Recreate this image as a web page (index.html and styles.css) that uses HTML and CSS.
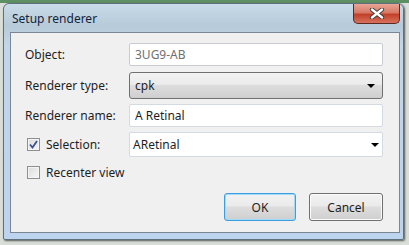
FILE: index.html
```html
<!DOCTYPE html>
<html lang="en">
  <head>
    <meta charset="UTF-8" />
    <title>Setup renderer</title>
    <link rel="stylesheet" href="styles.css">
  </head>
  <body>
    <div class="window">
      <div class="window__titlebar">
        <p class="window__title">Setup renderer</p>
        <button class="window__close" aria-label="Close">
          <svg width="16" height="11" viewBox="0 0 16 11">
            <path d="M3 1.5 L13 9.5 M13 1.5 L3 9.5" stroke="#3b3b3b" stroke-width="4.2" stroke-linecap="round" />
            <path d="M3 1.5 L13 9.5 M13 1.5 L3 9.5" stroke="#ffffff" stroke-width="2.4" stroke-linecap="round" />
          </svg>
        </button>
      </div>

      <div class="window__client">
        <div class="row row--field">
          <span class="row__label">Object:</span>
          <input class="field field--disabled" type="text" value="3UG9-AB" readonly />
        </div>
        <div class="row row--combo">
          <span class="row__label">Renderer type:</span>
          <div class="combo combo--button">
            <span>cpk</span>
            <span class="combo__arrow"></span>
          </div>
        </div>
        <div class="row row--field">
          <span class="row__label">Renderer name:</span>
          <input class="field" type="text" value="A Retinal" />
        </div>
        <div class="row row--edit">
          <label class="row__label check">
            <span class="check__box">
              <svg width="9" height="9" viewBox="0 0 9 9">
                <path d="M1 4.5 L3.5 7.5 L8 1" fill="none" stroke="#3c5296" stroke-width="1.8" />
              </svg>
            </span>
            Selection:
          </label>
          <div class="combo combo--edit">
            <span>ARetinal</span>
            <span class="combo__arrow"></span>
          </div>
        </div>
        <div class="row row--check">
          <label class="check">
            <span class="check__box"></span>
            Recenter view
          </label>
        </div>
        <div class="buttons">
          <button class="btn btn--default">OK</button>
          <button class="btn">Cancel</button>
        </div>
      </div>
    </div>
  </body>
</html>
```

FILE: styles.css
```css
* {
  margin: 0;
  padding: 0;
  box-sizing: border-box;
}

body {
  width: 409px;
  height: 245px;
  overflow: hidden;
  background: linear-gradient(180deg, #5e8f62 0, #5e8f62 3px, #d9ded9 3px);
  font-family: "Noto Sans", "Open Sans", sans-serif;
  font-size: 12px;
  color: #1e1e1e;
  padding: 3px 0 0 3px;
}

.window {
  width: 401px;
  height: 237px;
  display: flex;
  flex-direction: column;
  padding: 0 3px 6px 6px;
  border: 1px solid #5f6f7d;
  border-radius: 6px 6px 2px 2px;
  background: linear-gradient(180deg, #c9dbe8 0, #b6cad9 22px, #c2d6e9 40px, #bcd4ee 100%);
  box-shadow: 1px 1px 2px rgba(0, 0, 0, 0.6);
}

.window__titlebar {
  height: 28px;
  display: flex;
  justify-content: space-between;
  align-items: flex-start;
}

.window__title {
  margin: 6px 0 0 2px;
  font-size: 12px;
  color: #13233a;
}

.window__close {
  width: 47px;
  height: 20px;
  display: flex;
  justify-content: center;
  align-items: center;
  border: 1px solid #5c2a22;
  border-top: none;
  border-radius: 0 0 5px 5px;
  background: linear-gradient(180deg, #e9a597 0, #d67a66 45%, #c2402a 55%, #d8725c 100%);
}

.window__client {
  flex: 1;
  display: flex;
  flex-direction: column;
  padding: 10px 16px 0 14px;
  border: 1px solid #7b8593;
  background: #f0f0f0;
}

.row {
  display: flex;
  align-items: center;
}

.row__label {
  width: 104px;
  flex-shrink: 0;
}

.row--field {
  height: 23px;
}

.row--combo {
  height: 27px;
  margin: 6px 0 5px;
}

.row--edit {
  height: 25px;
  margin-top: 5px;
}

.row--check {
  height: 18px;
  margin-top: 6px;
}

.field,
.combo {
  width: 254px;
  height: 100%;
  font-family: inherit;
  font-size: 12px;
  color: #1e1e1e;
  padding: 0 5px;
  background: #ffffff;
  border: 1px solid #d5d9e0;
  border-radius: 2px;
}

.field--disabled {
  color: #707070;
  border-color: #c8ccd2;
}

.combo {
  display: flex;
  justify-content: space-between;
  align-items: center;
}

.combo--button {
  border-color: #707070;
  border-radius: 3px;
  background: linear-gradient(180deg, #f2f2f2 0, #ebebeb 45%, #dddddd 50%, #cfcfcf 100%);
  padding-right: 7px;
}

.combo--edit {
  padding: 0 3px 0 3px;
}

.combo__arrow {
  width: 0;
  height: 0;
  border-left: 4px solid transparent;
  border-right: 4px solid transparent;
  border-top: 4px solid #000000;
}

.check {
  display: flex;
  align-items: center;
  gap: 6px;
  padding-left: 2px;
}

.check__box {
  width: 13px;
  height: 13px;
  display: flex;
  justify-content: center;
  align-items: center;
  border: 1px solid #8e8f8f;
  background: linear-gradient(135deg, #dcdcdc 0, #f6f6f6 100%);
  box-shadow: inset 0 0 0 1px #f4f4f4;
}

.buttons {
  display: flex;
  justify-content: flex-end;
  gap: 13px;
  margin-top: 12px;
}

.btn {
  width: 74px;
  height: 28px;
  font-family: inherit;
  font-size: 12px;
  color: #1e1e1e;
  border: 1px solid #707070;
  border-radius: 3px;
  background: linear-gradient(180deg, #f2f2f2 0, #ebebeb 45%, #dddddd 50%, #cfcfcf 100%);
  box-shadow: inset 0 0 0 1px #fbfbfb;
}

.btn--default {
  width: 72px;
  border-color: #3c9ee0;
  box-shadow: inset 0 0 0 1px #9edcf8;
}
```
